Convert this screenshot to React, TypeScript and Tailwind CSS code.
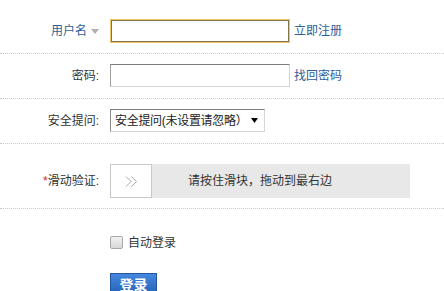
import { useState } from "react";

function Label({ children }: { children: React.ReactNode }) {
  return (
    <div className="flex w-[100px] shrink-0 items-center justify-end pr-[1px] text-[12px] text-[#333]">
      {children}
    </div>
  );
}

export default function App() {
  const [remember, setRemember] = useState(false);
  return (
    <div className="min-h-screen bg-white pt-[9px] font-['Liberation_Sans','Noto_Sans_CJK_SC',sans-serif] text-[12px] leading-none text-[#333]">
      {/* username */}
      <div className="flex h-[45px] items-start border-b border-dotted border-[#c8c8c8] pt-[10px]">
        <div className="flex h-[24px] items-center">
          <div className="flex w-[100px] shrink-0 items-center justify-end pr-[1px] text-[12px] text-[#2c6098]">
            用户名
            <svg width="8" height="5" viewBox="0 0 8 5" className="ml-[4px]">
              <path d="M0 0h8L4 5z" fill="#b0b0b0" />
            </svg>
          </div>
          <input
            type="text"
            className="ml-[10px] h-[24px] w-[180px] border border-[#f0c468] px-1 shadow-[inset_0_0_0_1px_#84744e] outline-none"
          />
          <a href="#" className="ml-[4px] text-[12px] text-[#2c6098]">
            立即注册
          </a>
        </div>
      </div>

      {/* password */}
      <div className="flex h-[45px] items-start border-b border-dotted border-[#c8c8c8] pt-[10px]">
        <div className="flex h-[23px] items-center">
          <Label>密码:</Label>
          <input
            type="password"
            className="ml-[10px] h-[23px] w-[180px] border border-[#d6d6d6] border-t-[#7c7c7c] border-l-[#a0a0a0] px-1 outline-none"
          />
          <a href="#" className="ml-[4px] text-[12px] text-[#2c6098]">
            找回密码
          </a>
        </div>
      </div>

      {/* security question */}
      <div className="flex h-[45px] items-start border-b border-dotted border-[#c8c8c8] pt-[10px]">
        <div className="flex h-[23px] items-center">
          <Label>安全提问:</Label>
          <div className="ml-[10px] flex h-[23px] w-[155px] items-center border border-[#d6d6d6] border-t-[#7c7c7c] border-l-[#8a8a8a] pl-[4px] text-[12px] tracking-[-0.3px] text-[#222]">
            <span className="whitespace-nowrap">安全提问(未设置请忽略）</span>
            <svg width="7" height="5" viewBox="0 0 7 5" className="ml-auto mr-[6px] shrink-0">
              <path d="M0 0h7L3.5 5z" fill="#000" />
            </svg>
          </div>
        </div>
      </div>

      {/* slider verification */}
      <div className="flex h-[65px] items-start border-b border-dotted border-[#c8c8c8] pt-[20px]">
        <div className="flex h-[34px] items-center">
          <Label>
            <span className="text-[#e02020]">*</span>滑动验证:
          </Label>
          <div className="relative ml-[10px] flex h-[34px] w-[300px] bg-[#e8e8e8]">
            <div className="flex h-[34px] w-[42px] items-center justify-center border border-[#c8c8c8] bg-white">
              <svg width="13" height="11" viewBox="0 0 13 11" fill="none" stroke="#a8a8a8" strokeWidth="1">
                <path d="M1 0.5l5 5-5 5M6.5 0.5l5 5-5 5" />
              </svg>
            </div>
            <div className="absolute inset-0 flex items-center justify-center text-[12px] text-[#333]">
              请按住滑块，拖动到最右边
            </div>
          </div>
        </div>
      </div>

      {/* remember + submit */}
      <div className="flex flex-col items-start pl-[110px] pt-[27px]">
        <label className="flex h-[13px] items-center">
          <input
            type="checkbox"
            checked={remember}
            onChange={(e) => setRemember(e.target.checked)}
            className="h-[13px] w-[13px] appearance-none rounded-[2px] border border-[#a8a8a8] bg-gradient-to-b from-[#f2f2f2] to-[#d8d8d8]"
          />
          <span className="ml-[5px] text-[12px] text-[#333]">自动登录</span>
        </label>
        <button className="mt-[24px] flex h-[24px] w-[47px] items-center justify-center border border-[#22579c] bg-gradient-to-b from-[#4688df] to-[#1f5eb5] text-[14px] font-bold text-white">
          登录
        </button>
      </div>
    </div>
  );
}
